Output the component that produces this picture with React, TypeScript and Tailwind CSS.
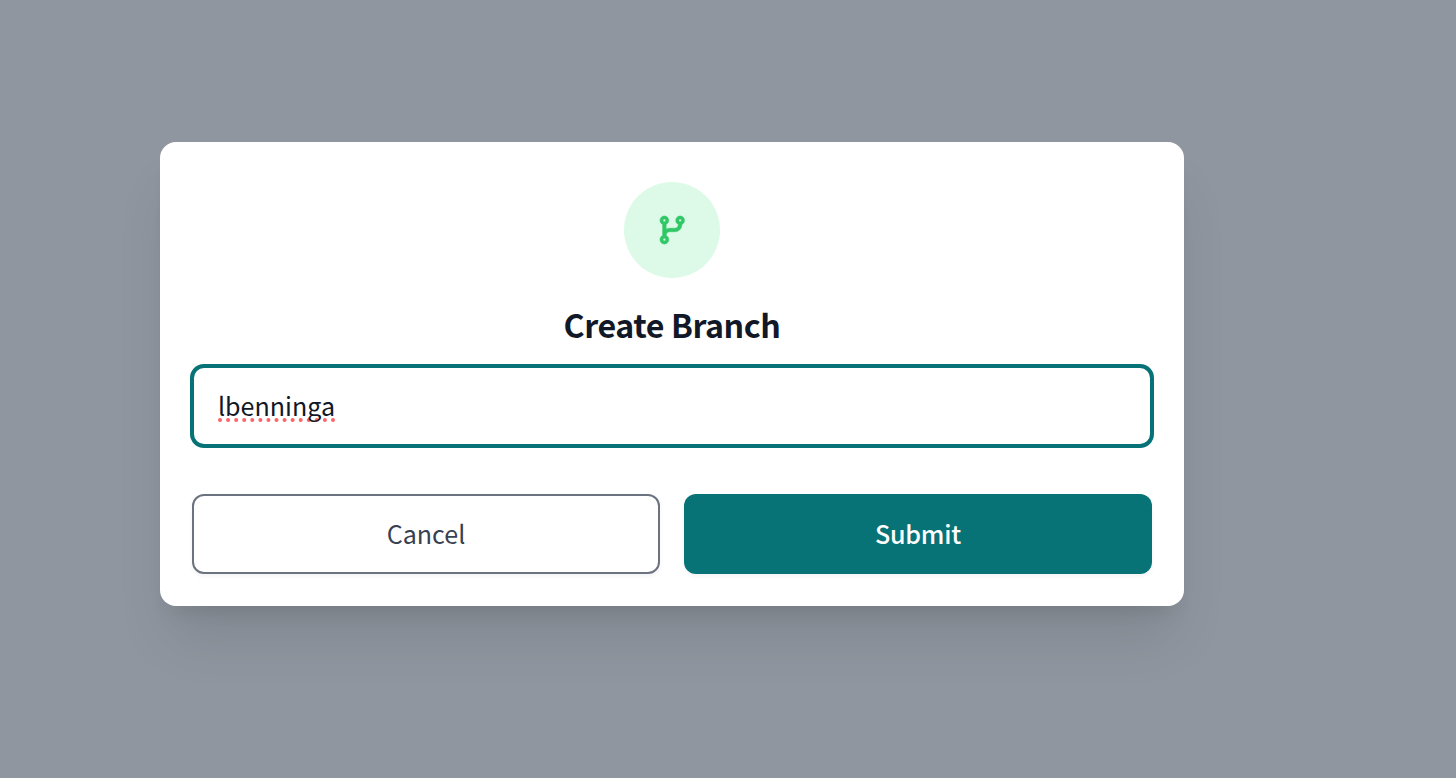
import { useState } from "react";
import { FaCodeBranch } from "react-icons/fa6";

function SpellingMark() {
  return (
    <svg aria-hidden="true" viewBox="0 0 118 4" className="pointer-events-none absolute left-6 top-[50px] h-1 w-[118px]">
      {Array.from({ length: 15 }, (_, i) => (
        <circle key={i} cx={2 + i * 8.07} cy={2} r={2} fill="#ff6367" />
      ))}
    </svg>
  );
}

export default function App() {
  const [name, setName] = useState("lbenninga");

  return (
    <div className="h-screen w-full overflow-hidden bg-[#8f969f] pl-40 pt-[142px] font-['Noto_Sans_CJK_SC','Noto_Sans',sans-serif]">
      <div
        role="dialog"
        aria-labelledby="dialog-title"
        className="flex h-[464px] w-[1024px] flex-col rounded-2xl bg-white px-8 pb-8 pt-10 shadow-[0_40px_56px_-10px_rgb(0_0_0/0.1),0_16px_20px_-12px_rgb(0_0_0/0.1)]"
      >
        <div className="mx-auto flex size-24 shrink-0 items-center justify-center rounded-full bg-[#dcfae7]">
          <FaCodeBranch className="h-7 w-[24.5px] overflow-visible stroke-[#30c766] stroke-[10] text-[#30c766]" />
        </div>
        <h2
          id="dialog-title"
          className="mt-[18px] h-14 text-center text-[32.2px] font-bold leading-[56px] tracking-[-0.42px] text-[#111827]"
        >
          Create Branch
        </h2>
        <div className="relative mt-3.5 flex h-20 shrink-0 items-center rounded-xl border-2 border-[#077376] bg-white px-6 ring-2 ring-[#077376]">
          {name === "lbenninga" && <SpellingMark />}
          <input
            aria-label="Branch name"
            spellCheck={false}
            value={name}
            onChange={(e) => setName(e.target.value)}
            className="relative mb-0.5 w-full bg-transparent text-[25.07px] leading-10 text-[#111827] outline-none"
          />
        </div>
        <div className="mt-auto grid grid-cols-2 gap-6">
          <button className="h-20 rounded-xl border-2 border-[#6b7280] bg-white pb-0.5 text-[25.07px] leading-10 text-[#374151] shadow-[0_2px_4px_rgb(0_0_0/0.05)]">
            Cancel
          </button>
          <button className="h-20 rounded-xl bg-[#077376] pb-0.5 text-[25.07px] font-medium leading-10 tracking-[-0.25px] text-white shadow-[0_2px_4px_rgb(0_0_0/0.05)]">
            Submit
          </button>
        </div>
      </div>
    </div>
  );
}
